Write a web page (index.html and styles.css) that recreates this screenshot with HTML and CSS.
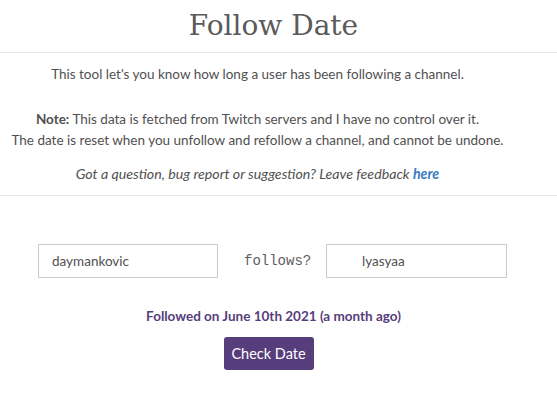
FILE: index.html
```html
<!doctype html>
<html lang="en">
	<head>
		<meta charset="UTF-8" />
		<title>Follow Date</title>
		<link rel="stylesheet" href="styles.css">
	</head>
	<body>
		<header class="header">
			<h1>Follow Date</h1>
		</header>

		<section class="intro">
			<p>This tool let's you know how long a user has been following a channel.</p>
			<p>
				<b>Note:</b> This data is fetched from Twitch servers and I have no control over it.<br />
				The date is reset when you unfollow and refollow a channel, and cannot be undone.
			</p>
			<p class="feedback">
				Got a question, bug report or suggestion? Leave feedback <a href="#">here</a>
			</p>
		</section>

		<main>
			<form class="lookup">
				<input type="text" class="field" value="daymankovic" />
				<span class="follows">follows?</span>
				<input type="text" class="field field-channel" value="lyasyaa" />
			</form>

			<div class="result">Followed on June 10th 2021 (a month ago)</div>

			<div class="actions">
				<button type="button" class="button">Check Date</button>
			</div>
		</main>
	</body>
</html>
```

FILE: styles.css
```css
:root {
	--color-text: #505050;
	--color-title: #5a5a5a;
	--color-line: #e8e8e8;
	--color-border: #cccccc;
	--color-purple: #563d7c;
	--color-link: #3a7bbf;
}

body {
	margin: 0;
	background-color: #ffffff;
	color: var(--color-text);

	font-family: Lato, 'Open Sans', sans-serif;
	font-size: 13.5px;
	line-height: 21px;
}

h1 {
	margin: 0;
	font-family: 'DejaVu Serif', serif;
	font-weight: 400;
	font-size: 28px;
	line-height: 52px;
	color: var(--color-title);
}

p {
	margin: 0;
}

a {
	text-decoration: none;
}

.header {
	height: 52px;
	padding-right: 10px;
	text-align: center;
	border-bottom: 1px solid var(--color-line);
}

.intro {
	padding: 11px 42px 11px 0;
	text-align: center;
	border-bottom: 1px solid var(--color-line);
}

.intro p + p {
	margin-top: 24px;
}

.intro .feedback {
	margin-top: 12px;
	font-style: italic;
	font-size: 14.2px;
}

.feedback a {
	font-weight: 700;
	color: var(--color-link);
}

main {
	padding-top: 48px;
}

.lookup {
	display: flex;
	justify-content: center;
	align-items: center;
	margin: 0;
	padding-right: 12px;
}

.field {
	box-sizing: border-box;
	width: 180px;
	height: 34px;
	padding: 0 13px;

	border: 1px solid var(--color-border);
	border-radius: 0;

	color: var(--color-text);
	font-family: Lato, 'Open Sans', sans-serif;
	font-size: 13.5px;
}

.field-channel {
	width: 181px;
	padding-left: 35px;
}

.follows {
	width: 82px;
	padding-left: 26px;

	font-family: 'Liberation Mono', monospace;
	font-size: 14px;
	color: #606060;
}

.result {
	margin-top: 28px;
	padding-right: 10px;
	text-align: center;
	font-weight: 700;
	color: var(--color-purple);
}

.actions {
	display: flex;
	justify-content: center;
	margin-top: 10px;
	padding-right: 20px;
}

.button {
	width: 90px;
	height: 33px;
	padding: 0;

	border: none;
	border-radius: 3px;
	background-color: var(--color-purple);
	color: #ffffff;

	font-family: Lato, 'Open Sans', sans-serif;
	font-size: 14.5px;
}
```
